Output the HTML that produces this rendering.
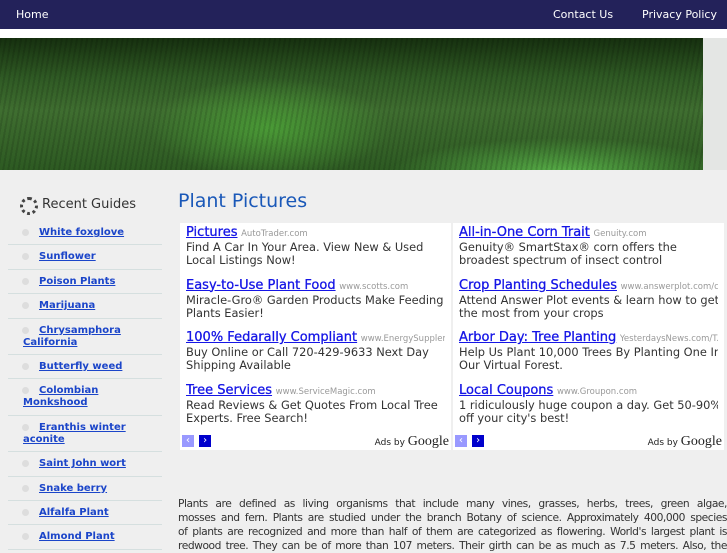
<!DOCTYPE html>
<html><head><style>
*{margin:0;padding:0;box-sizing:border-box}
body{width:727px;height:545px;overflow:hidden;background:#efefef;font-family:"DejaVu Sans","Liberation Sans",sans-serif;position:relative}
.top{position:absolute;left:0;top:0;width:727px;height:29px;background:#23225a;color:#fff;font-size:11px}
.top span{position:absolute;top:8px}
.strip{position:absolute;top:29px;left:0;width:727px;height:9px;background:#fff}
.banner{position:absolute;top:38px;left:0;width:703px;height:132px;background:
repeating-linear-gradient(100deg,rgba(0,0,0,.12) 0 2px,rgba(255,255,255,0) 2px 5px),
radial-gradient(ellipse 120px 50px at 270px 90px,#4a9a36 0%,rgba(61,138,44,0) 100%),
radial-gradient(ellipse 170px 35px at 560px 135px,#58b048 0%,rgba(74,160,58,0) 100%),
linear-gradient(180deg,#16300f 0%,#2f5a24 30%,#3f6e30 55%,#2d5a22 100%);}
.rt{position:absolute;top:38px;left:703px;width:24px;height:132px;background:#e4e6e4}
.side{position:absolute;left:8px;top:190px;width:154px}
.side h3{font-weight:normal;font-size:13px;color:#333;padding:7px 0 0 34px;height:31px;position:relative}
.side h3:before{content:"";position:absolute;left:12px;top:7px;width:12px;height:12px;border:3px dotted #444;border-radius:50%}
.side li{list-style:none;border-bottom:1px solid #d5dfdf;padding:6px 4px 5.4px 15px;font-size:10px;font-weight:bold;line-height:12px;text-indent:16px;position:relative}
.side li:before{content:"";position:absolute;left:14px;top:8px;width:7px;height:7px;border-radius:50%;background:#ddd}
.side a{color:#1b45c9;text-decoration:underline}
h1{position:absolute;left:178px;top:190px;font-weight:normal;font-size:19px;color:#1a58b8}
.ad{position:absolute;top:223px;width:271px;height:227px;background:#fff;padding:3px 6px}
.ad .b{height:52.5px;font-size:11.4px;line-height:13px;color:#333;white-space:nowrap;overflow:hidden}
.ad .t{font-size:13px;color:#1515e6;text-decoration:underline;font-weight:normal;-webkit-text-stroke:0.3px #1515e6}
.ad .u{font-size:8.5px;color:#999}
.ad .f{position:absolute;bottom:2px;left:2px;right:2px;height:13px}
.ar{display:inline-block;width:12px;height:12px;font-size:10px;color:#fff;text-align:center;line-height:12px;vertical-align:top}
.g{position:absolute;right:0;top:-1px;font-size:9px;color:#222}
.g i{font-family:"Liberation Serif",serif;font-style:normal;font-size:14px}
.p{position:absolute;left:178px;top:497px;width:549px;font-size:10.7px;line-height:14px;color:#333;letter-spacing:-0.45px}
.p span{display:block;white-space:nowrap;text-align:justify;text-align-last:justify}
</style></head><body>
<div class="top"><span style="left:16px">Home</span><span style="left:553px">Contact Us</span><span style="left:642px">Privacy Policy</span></div>
<div class="strip"></div>
<div class="banner"></div><div class="rt"></div>
<div class="side"><h3>Recent Guides</h3><ul>
<li><a>White foxglove</a></li><li><a>Sunflower</a></li><li><a>Poison Plants</a></li><li><a>Marijuana</a></li>
<li><a>Chrysamphora California</a></li><li><a>Butterfly weed</a></li><li><a>Colombian Monkshood</a></li>
<li><a>Eranthis winter aconite</a></li><li><a>Saint John wort</a></li><li><a>Snake berry</a></li><li><a>Alfalfa Plant</a></li><li><a>Almond Plant</a></li></ul></div>
<h1>Plant Pictures</h1>
<div class="ad" style="left:180px">
<div class="b"><span class="t">Pictures</span> <span class="u">AutoTrader.com</span><br>Find A Car In Your Area. View New &amp; Used<br>Local Listings Now!</div>
<div class="b"><span class="t">Easy-to-Use Plant Food</span> <span class="u">www.scotts.com</span><br>Miracle-Gro® Garden Products Make Feeding<br>Plants Easier!</div>
<div class="b"><span class="t">100% Fedarally Compliant</span> <span class="u">www.EnergySupplem...</span><br>Buy Online or Call 720-429-9633 Next Day<br>Shipping Available</div>
<div class="b"><span class="t">Tree Services</span> <span class="u">www.ServiceMagic.com</span><br>Read Reviews &amp; Get Quotes From Local Tree<br>Experts. Free Search!</div>
<div class="f"><span class="ar" style="background:#99f">‹</span> <span class="ar" style="background:#00c">›</span><span class="g">Ads by <i>Google</i></span></div>
</div>
<div class="ad" style="left:453px">
<div class="b"><span class="t">All-in-One Corn Trait</span> <span class="u">Genuity.com</span><br>Genuity® SmartStax® corn offers the<br>broadest spectrum of insect control</div>
<div class="b"><span class="t">Crop Planting Schedules</span> <span class="u">www.answerplot.com/c...</span><br>Attend Answer Plot events &amp; learn how to get<br>the most from your crops</div>
<div class="b"><span class="t">Arbor Day: Tree Planting</span> <span class="u">YesterdaysNews.com/T...</span><br>Help Us Plant 10,000 Trees By Planting One In<br>Our Virtual Forest.</div>
<div class="b"><span class="t">Local Coupons</span> <span class="u">www.Groupon.com</span><br>1 ridiculously huge coupon a day. Get 50-90%<br>off your city's best!</div>
<div class="f"><span class="ar" style="background:#99f">‹</span> <span class="ar" style="background:#00c">›</span><span class="g">Ads by <i>Google</i></span></div>
</div>
<div class="p"><span>Plants are defined as living organisms that include many vines, grasses, herbs, trees, green algae,</span><span>mosses and fern. Plants are studied under the branch Botany of science. Approximately 400,000 species</span><span>of plants are recognized and more than half of them are categorized as flowering. World's largest plant is</span><span>redwood tree. They can be of more than 107 meters. Their girth can be as much as 7.5 meters. Also, the</span></div>
</body></html>
